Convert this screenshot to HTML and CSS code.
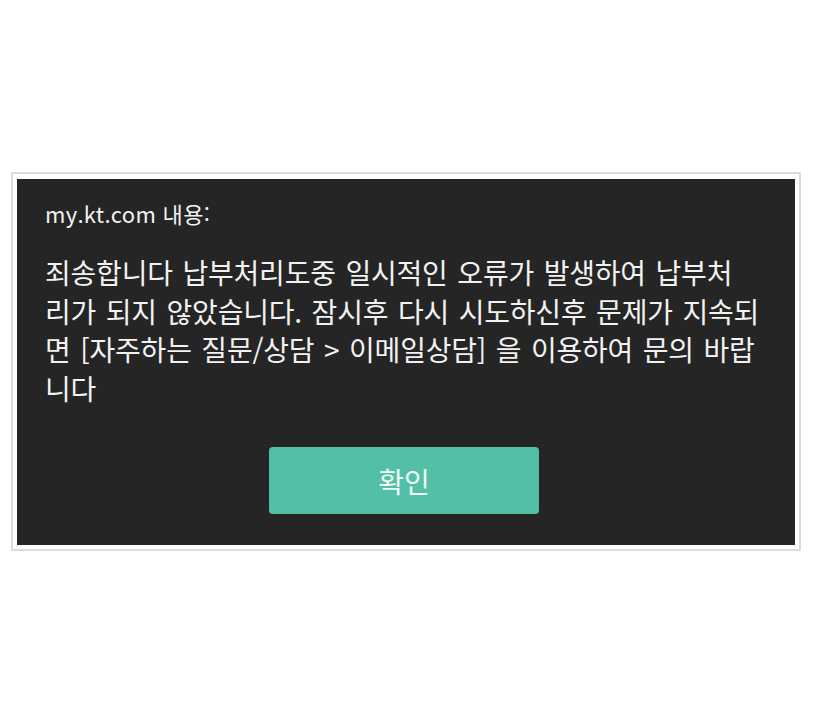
FILE: index.html
```html
<!DOCTYPE html>
<html lang="ko">
<head>
<meta charset="utf-8">
<title>my.kt.com 내용</title>
<link rel="stylesheet" href="styles.css">
</head>
<body>
<div class="frame">
  <div class="dialog">
    <div class="title">my.kt.com 내용:</div>
    <div class="message">
      <span class="line">죄송합니다 납부처리도중 일시적인 오류가 발생하여 납부처</span>
      <span class="line">리가 되지 않았습니다. 잠시후 다시 시도하신후 문제가 지속되</span>
      <span class="line">면 [자주하는 질문/상담 &gt; 이메일상담] 을 이용하여 문의 바랍</span>
      <span class="line">니다</span>
    </div>
    <div class="actions">
      <button class="ok" type="button">확인</button>
    </div>
  </div>
</div>
</body>
</html>
```

FILE: styles.css
```css
html, body {
  margin: 0;
  padding: 0;
  background: #ffffff;
}

body {
  font-family: "Noto Sans CJK KR", "Noto Sans", sans-serif;
}

.frame {
  box-sizing: border-box;
  width: 790px;
  margin: 172px 0 0 11px;
  border: 2px solid #dcdcdc;
  padding: 5px 4px 4px 4px;
  background: #ffffff;
}

.dialog {
  box-sizing: border-box;
  height: 366px;
  background: #252525;
  color: #f2f2f2;
  padding: 19px 20px 31px 28px;
  display: flex;
  flex-direction: column;
}

.title {
  font-size: 22px;
  line-height: 30px;
  height: 30px;
  letter-spacing: 0.3px;
  white-space: nowrap;
}

.message {
  margin-top: 25px;
  font-size: 28px;
  line-height: 38.5px;
  letter-spacing: -0.2px;
  word-spacing: 2px;
}

.line {
  display: block;
  white-space: nowrap;
}

.actions {
  margin-top: auto;
  display: flex;
  justify-content: center;
  padding-right: 12px;
}

.ok {
  width: 270px;
  height: 67px;
  border: none;
  border-radius: 4px;
  background: #54bfa7;
  color: #effaf6;
  font-family: "Noto Sans CJK KR", "Noto Sans", sans-serif;
  font-size: 28px;
  padding: 0;
  cursor: pointer;
}
```
